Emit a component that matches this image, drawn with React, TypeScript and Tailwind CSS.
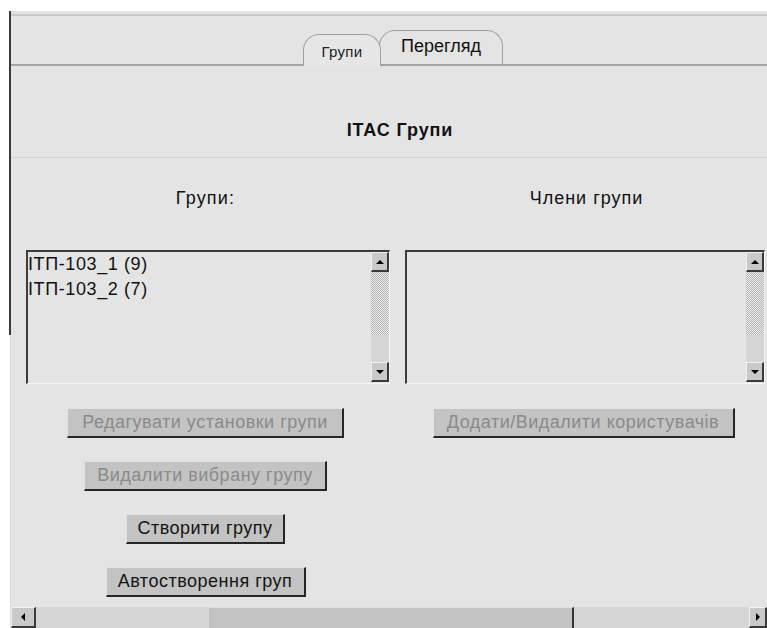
import React from 'react';

/* ── Classic grey form: ITAC groups admin page ─────────────────────── */

const font = "font-['Liberation_Sans',Arial,sans-serif]";

function Arrow({ dir }: { dir: 'up' | 'down' | 'left' | 'right' }) {
  const pts = {
    up: '0,5 4,1 8,5',
    down: '0,1 4,5 8,1',
    left: '5,0 1,4 5,8',
    right: '1,0 5,4 1,8',
  }[dir];
  const box = dir === 'up' || dir === 'down' ? '0 0 8 6' : '0 0 6 8';
  return (
    <svg viewBox={box} className={dir === 'up' || dir === 'down' ? 'h-[6px] w-[8px]' : 'h-[8px] w-[6px]'}>
      <polygon points={pts} fill="#000" />
    </svg>
  );
}

function ScrollBtn({ dir, className = '' }: { dir: 'up' | 'down' | 'left' | 'right'; className?: string }) {
  return (
    <div
      className={`flex items-center justify-center bg-[#c9c9c9] border-t border-l border-t-[#f2f2f2] border-l-[#f2f2f2] border-b-2 border-r-2 border-b-[#3a3a3a] border-r-[#3a3a3a] ${className}`}
    >
      <Arrow dir={dir} />
    </div>
  );
}

function ListBox({ items, width }: { items: string[]; width: string }) {
  return (
    <div
      className={`flex h-[134px] ${width} border-t-2 border-l-2 border-t-[#3c3c3c] border-l-[#3c3c3c] border-b border-r border-b-[#f6f6f6] border-r-[#f6f6f6] bg-[#e4e4e4]`}
    >
      <div className="flex-1 text-[18px] leading-[25px] tracking-[0.6px] text-[#111]">
        {items.map(it => (
          <div key={it}>{it}</div>
        ))}
      </div>
      {/* vertical scrollbar */}
      <div className="flex w-[18px] flex-col pb-[1px]">
        <ScrollBtn dir="up" className="h-[20px]" />
        <div className="h-[63px] bg-[repeating-conic-gradient(#b4b4b4_0%_25%,#ececec_0%_50%)] bg-[length:2px_2px]" />
        <div className="flex-1 bg-[#d6d6d6]" />
        <ScrollBtn dir="down" className="h-[20px]" />
      </div>
    </div>
  );
}

function FormButton({ label, width, disabled }: { label: string; width: string; disabled?: boolean }) {
  return (
    <div
      className={`flex h-[30px] ${width} items-center justify-center bg-[#c3c3c3] border-t border-l border-t-[#e2e2e2] border-l-[#e2e2e2] border-b-2 border-r-2 border-b-[#262626] border-r-[#262626] text-[18px] tracking-[0.5px] ${
        disabled ? 'text-[#8a8a8a]' : 'text-[#141414]'
      }`}
    >
      {label}
    </div>
  );
}

export default function App() {
  return (
    <div className={`relative h-[628px] w-[767px] overflow-hidden bg-white ${font}`}>
      {/* dark left rule of the outer frame */}
      <div className="absolute left-[9px] top-[11px] h-[324px] w-[2px] bg-[#3a3a3a]" />

      <div className="ml-[10px] mt-[11px] flex h-[617px] flex-col border-l border-l-[#d9d9d9] bg-[#e4e4e4]">
        {/* ── Header with tabs ───────────────────────────────── */}
        <div className="h-[3px]" />
        <div className="h-[2px] bg-[#c9c9c9]" />
        <div className="flex h-[50px] items-end border-b-2 border-b-[#a4a4a4] pl-[292px]">
          <div className="relative z-10 -mb-[2px] flex h-[32px] w-[78px] items-center justify-center rounded-t-[16px] border border-b-0 border-[#a0a0a0] bg-[#e6e6e6] pt-[3px] text-[15px] tracking-[0.3px] text-[#222]">
            Групи
          </div>
          <div className="-ml-[2px] flex h-[34px] w-[124px] items-center justify-center rounded-t-[16px] border border-b-0 border-[#a0a0a0] bg-[#e4e4e4] pb-[2px] text-[18px] text-[#111]">
            Перегляд
          </div>
        </div>
        <div className="flex h-[91px] justify-center pl-[22px] pt-[54px] text-[18px] font-bold leading-[20px] tracking-[0.9px] text-[#111]">
          ІТАС Групи
        </div>

        {/* ── Groups panel ────────────────────────────────────── */}
        <div className="grid flex-1 grid-cols-[389px_1fr] border-t border-t-[#d2d2d2]">
          <div className="flex flex-col items-center pt-[30px]">
            <div className="text-[18px] leading-[20px] tracking-[1.2px] text-[#111]">Групи:</div>
            <div className="mt-[42px] self-start pl-[15px]">
              <ListBox items={['ІТП-103_1 (9)', 'ІТП-103_2 (7)']} width="w-[364px]" />
            </div>
            <div className="mt-[24px] flex flex-col items-center gap-[23px]">
              <FormButton label="Редагувати установки групи" width="w-[277px]" disabled />
              <FormButton label="Видалити вибрану групу" width="w-[243px]" disabled />
              <FormButton label="Створити групу" width="w-[159px]" />
              <FormButton label="Автостворення груп" width="w-[200px]" />
            </div>
          </div>
          <div className="flex flex-col items-center pt-[30px]">
            <div className="pl-[6px] text-[18px] leading-[20px] tracking-[1px] text-[#111]">Члени групи</div>
            <div className="mt-[42px] self-start pl-[5px]">
              <ListBox items={[]} width="w-[360px]" />
            </div>
            <div className="mt-[24px]">
              <FormButton label="Додати/Видалити користувачів" width="w-[302px]" disabled />
            </div>
          </div>
        </div>

        {/* ── Horizontal scrollbar ─────────────────────────────── */}
        <div className="flex h-[21px] bg-[#d6d6d6]">
          <ScrollBtn dir="left" className="w-[25px]" />
          <div className="w-[173px]" />
          <div className="w-[365px] border-t border-t-[#dedede] border-r-2 border-r-[#333] bg-[#c3c3c3]" />
          <div className="flex-1" />
          <ScrollBtn dir="right" className="w-[18px]" />
        </div>
      </div>
    </div>
  );
}
